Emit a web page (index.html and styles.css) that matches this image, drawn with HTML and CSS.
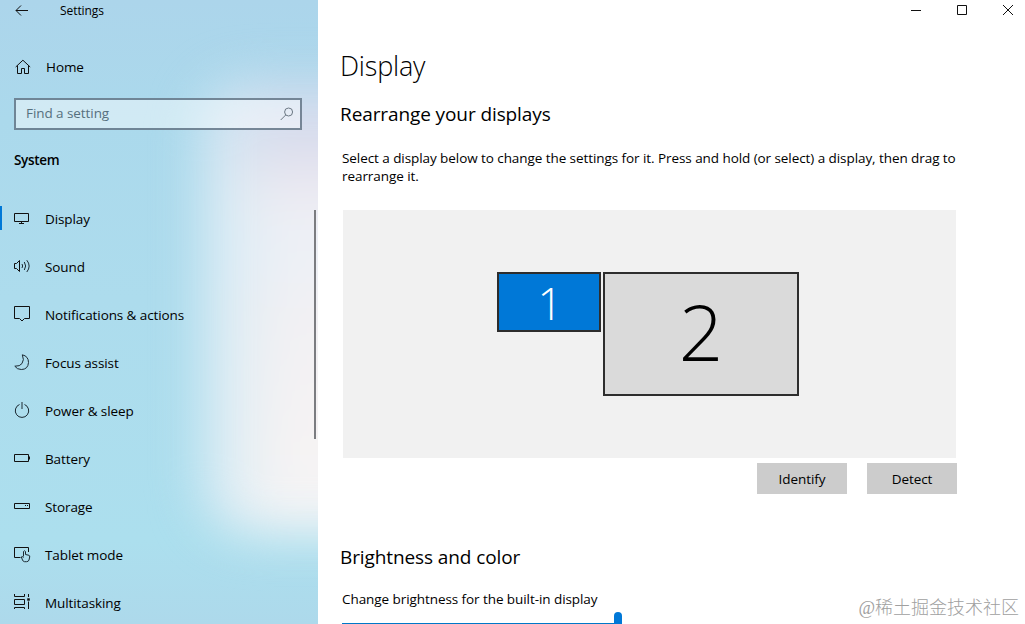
FILE: index.html
```html
<!DOCTYPE html>
<html lang="en">
<head>
	<meta charset="UTF-8">
	<title>Settings</title>
	<link rel="stylesheet" href="styles.css">
</head>

<body>
	<div class="window">
		<div class="sidebar">
			<div class="sidebar-glow"></div>

			<div class="titlebar">
				<svg class="icon-back" width="14" height="12" viewBox="0 0 14 12"><path d="M1 5.5H13M6 .5L1 5.5L6 10.5"/></svg>
				<span class="titlebar-text">Settings</span>
			</div>

			<a class="home">
				<svg width="16" height="16" viewBox="0 0 16 16"><path d="M.7 8L7.9 1.2L15.2 8M2.5 6.5V14.5H6.5V9.5H9.5V14.5H13.5V6.5"/></svg>
				<span>Home</span>
			</a>

			<div class="search">
				<span class="search-text">Find a setting</span>
				<svg width="14" height="14" viewBox="0 0 14 14"><circle cx="8.6" cy="5" r="4"/><path d="M5.8 7.9L.7 13"/></svg>
			</div>

			<div class="sidebar-title">System</div>

			<div class="nav">
				<a class="nav-item nav-item-active">
					<svg width="18" height="18" viewBox="0 0 18 18"><path d="M.5 3.5H14.5V11.5H.5ZM7.5 11.5V13.5M5 13.5H10"/></svg>
					<span>Display</span>
				</a>
				<a class="nav-item">
					<svg width="18" height="18" viewBox="0 0 18 18"><path d="M.5 5.5H2.5L5.5 2.5V13.5L2.5 10.5H.5Z"/><path class="thin" d="M8 6Q9.3 8 8 10M10.3 4Q13 8 10.3 12M12.8 2.2Q17.5 8 12.8 14"/></svg>
					<span>Sound</span>
				</a>
				<a class="nav-item">
					<svg width="18" height="18" viewBox="0 0 18 18"><path d="M.5 .5H15.5V12.5H10.5L8 15L5.5 12.5H.5Z"/></svg>
					<span>Notifications &amp; actions</span>
				</a>
				<a class="nav-item">
					<svg width="18" height="18" viewBox="0 0 18 18"><path class="thin" d="M8.3 .8Q14.5 2.2 14.5 8.5Q14 15.5 7.3 15.5Q3 15.5 .8 12.2Q6 12.5 8 9.5Q10.6 6 8.3 .8Z"/></svg>
					<span>Focus assist</span>
				</a>
				<a class="nav-item">
					<svg width="18" height="18" viewBox="0 0 18 18"><path class="thin" d="M5.5 2.5A6.7 6.7 0 1 0 10.5 2.5"/><path class="thin" d="M8 0V7"/></svg>
					<span>Power &amp; sleep</span>
				</a>
				<a class="nav-item">
					<svg width="18" height="18" viewBox="0 0 18 18"><path d="M.5 4.5H14.5V11.5H.5ZM15.5 6.5V9.5"/></svg>
					<span>Battery</span>
				</a>
				<a class="nav-item">
					<svg width="18" height="18" viewBox="0 0 18 18"><path d="M.5 5.5H15.5V10.5H.5ZM11 7.5H12M13 7.5H14"/></svg>
					<span>Storage</span>
				</a>
				<a class="nav-item">
					<svg width="18" height="18" viewBox="0 0 18 18"><path d="M6.5 11.5H.5V1.5H14.5V6"/><path class="thin" d="M9.5 10.5V5.5Q10.5 4 11.5 5.5V8.5L15 9.3Q16 9.6 15.7 11L15 14Q14.5 15.7 12.5 15.7H10.5Q9 15.5 8.5 14L7.3 11Q7.5 9.5 9.5 11.5"/></svg>
					<span>Tablet mode</span>
				</a>
				<a class="nav-item">
					<svg width="18" height="18" viewBox="0 0 18 18"><path d="M.5 0V2.5H10.5V0M.5 5.5H10.5V10.5H.5ZM.5 15V13.5H10.5V15M14.5 0V3M14.5 7.5V15"/><path d="M13.2 5.5H15.8" stroke-width="2.4"/></svg>
					<span>Multitasking</span>
				</a>
			</div>

			<div class="scrollbar"></div>
		</div>

		<div class="main">
			<div class="controls">
				<svg width="10" height="10" viewBox="0 0 10 10"><path d="M0 5.5H10"/></svg>
				<svg width="10" height="10" viewBox="0 0 10 10"><path d="M.5 .5H9.5V9.5H.5Z"/></svg>
				<svg width="10" height="10" viewBox="0 0 10 10"><path d="M0 0L10 10M10 0L0 10"/></svg>
			</div>

			<h1>Display</h1>
			<h2>Rearrange your displays</h2>
			<p class="desc">Select a display below to change the settings for it. Press and hold (or select) a display, then drag to<br>rearrange it.</p>

			<div class="screens">
				<div class="screen screen-1">1</div>
				<div class="screen screen-2">2</div>
			</div>

			<div class="buttons">
				<a class="button">Identify</a>
				<a class="button">Detect</a>
			</div>

			<h2 class="brightness-title">Brightness and color</h2>
			<p class="label">Change brightness for the built-in display</p>
			<div class="slider">
				<div class="slider-track"></div>
				<div class="slider-thumb"></div>
			</div>
		</div>

		<div class="watermark">@稀土掘金技术社区</div>
	</div>
</body>
</html>
```
FILE: styles.css
```css
body {
	margin: 0;
	background: #fff;
	font-family: "Open Sans", "Noto Sans", sans-serif;
	font-size: 13.5px;
	letter-spacing: -.07px;
	color: #000;
}

svg {
	display: block;
	flex: none;
	fill: none;
	stroke: #111;
	stroke-width: 1;
}

.thin {
	stroke: #1c2a33;
}

.window {
	position: relative;
	display: flex;
	width: 1025px;
	height: 624px;
	overflow: hidden;
}

/* left column */
.sidebar {
	position: relative;
	z-index: 0;
	width: 318px;
	height: 624px;
	flex: none;
	overflow: hidden;
	background: linear-gradient(180deg, #acd5eb 0, #abd9ec 120px, #addced 300px, #acdfee 540px, #add9eb 624px);
}

.sidebar-glow {
	position: absolute;
	z-index: -1;
	top: 80px;
	left: 200px;
	width: 220px;
	height: 454px;
	border-radius: 50px 0 0 50px;
	background:
		linear-gradient(90deg, #d2e9f4 0, rgba(210, 233, 244, 0) 80px),
		linear-gradient(180deg, #cadbee 0, #dadcec 60px, #e6e4ef 90px, #efeef3 125px, #ecf0f7 170px, #f1f0f3 220px, #f6f3f3 370px, #f3f4f6 454px);
	filter: blur(24px);
}

.titlebar {
	display: flex;
	align-items: center;
	height: 22px;
	padding-left: 15px;
}

.titlebar-text {
	padding: 0 0 2px 31px;
	font-size: 12px;
}

.home {
	display: flex;
	align-items: center;
	gap: 15px;
	height: 30px;
	padding: 30px 0 0 15px;
}

.search {
	display: flex;
	align-items: center;
	justify-content: space-between;
	box-sizing: border-box;
	width: 288px;
	height: 32px;
	margin: 16px 0 0 14px;
	padding: 0 6px 2px 10px;
	border: 2px solid rgba(70, 90, 110, .7);
	background: rgba(255, 255, 255, .45);
	color: #56707e;
}

.search svg {
	padding-top: 2px;
	stroke: #6c7884;
}

.sidebar-title {
	height: 20px;
	margin: 20px 0 0 14px;
	line-height: 20px;
	font-weight: 600;
	letter-spacing: -.3px;
}

.nav {
	padding-top: 25px;
}

.nav-item {
	display: flex;
	align-items: center;
	gap: 13px;
	height: 48px;
	padding-left: 14px;
	letter-spacing: -.1px;
}

.nav-item-active {
	background: linear-gradient(#0078d7, #0078d7) no-repeat 0 11px / 2px 24px;
}

.scrollbar {
	position: absolute;
	top: 210px;
	left: 314px;
	width: 2px;
	height: 229px;
	background: #7b7c80;
}

/* right column */
.main {
	flex: 1;
	padding-left: 22px;
}

.controls {
	display: flex;
	justify-content: flex-end;
	gap: 36px;
	height: 15px;
	padding: 5px 12px 0 0;
}

h1 {
	height: 40px;
	margin: 26px 0 0;
	line-height: 40px;
	font-size: 27px;
	font-weight: 300;
	letter-spacing: -.2px;
}

h2 {
	height: 28px;
	margin: 14px 0 0;
	line-height: 28px;
	font-size: 19px;
	font-weight: 400;
	letter-spacing: -.1px;
}

.desc {
	height: 36px;
	margin: 21px 0 0 2px;
	line-height: 18px;
	white-space: nowrap;
}

.screens {
	display: flex;
	align-items: flex-start;
	gap: 2px;
	box-sizing: border-box;
	width: 613px;
	height: 248px;
	margin: 25px 0 0 3px;
	padding: 62px 0 0 154px;
	background: #f1f1f1;
}

.screen {
	box-sizing: border-box;
	border: 2px solid #2d2d2d;
	font-weight: 300;
	text-align: center;
}

.screen-1 {
	width: 104px;
	height: 60px;
	padding-left: 2px;
	line-height: 58px;
	font-size: 44px;
	background: #0078d7;
	color: #fff;
}

.screen-2 {
	width: 196px;
	height: 124px;
	line-height: 114px;
	font-size: 78px;
	background: #dadada;
}

.buttons {
	display: flex;
	gap: 20px;
	margin: 5px 0 0 417px;
}

.button {
	width: 90px;
	height: 31px;
	line-height: 32px;
	text-align: center;
	background: #ccc;
}

.brightness-title {
	margin-top: 49px;
}

.label {
	height: 20px;
	margin: 18px 0 0 2px;
	line-height: 20px;
}

.slider {
	position: relative;
	height: 14px;
	margin: 2px 0 0 2px;
}

.slider-track {
	width: 272px;
	height: 2px;
	padding-top: 12px;
	background: #0078c8 content-box;
}

.slider-thumb {
	position: absolute;
	top: 1px;
	left: 272px;
	width: 8px;
	height: 24px;
	border-radius: 4px;
	background: #0078d7;
}

.watermark {
	position: absolute;
	right: 6px;
	bottom: 4px;
	line-height: 24px;
	font-family: "Liberation Serif", "Noto Sans CJK SC", sans-serif;
	font-size: 18px;
	font-weight: 300;
	letter-spacing: 0;
	color: #a0a0a0;
}
```
